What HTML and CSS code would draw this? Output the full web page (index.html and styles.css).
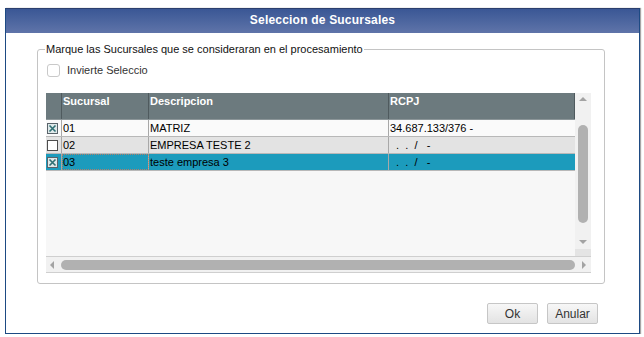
FILE: index.html
```html
<!DOCTYPE html>
<html lang="es">
<head>
    <meta charset="UTF-8">
    <meta name="viewport" content="width=device-width, initial-scale=1.0">
    <title>Seleccion de Sucursales</title>
    <link rel="stylesheet" href="styles.css">
</head>
<body>
    <div class="dialog">
        <div class="titlebar">Seleccion de Sucursales</div>

        <div class="dialog-body">
            <fieldset class="group">
                <legend>Marque las Sucursales que se consideraran en el procesamiento</legend>

                <label class="invert">
                    <span class="round-box"></span>
                    Invierte Seleccio
                </label>

                <div class="grid">
                    <div class="grid-main">
                        <div class="grid-view">
                            <div class="grid-row grid-head">
                                <div class="cell"></div>
                                <div class="cell">Sucursal</div>
                                <div class="cell">Descripcion</div>
                                <div class="cell">RCPJ</div>
                            </div>
                            <div class="grid-row row-odd">
                                <div class="cell cell-check">
                                    <svg width="11" height="11" viewBox="0 0 11 11"><rect x="0.5" y="0.5" width="10" height="10" fill="#dfe9ea" stroke="#59636a"/><path d="M2.5 2.5 L8.5 8.5 M8.5 2.5 L2.5 8.5" stroke="#2f6f73" stroke-width="1.6"/></svg>
                                </div>
                                <div class="cell">01</div>
                                <div class="cell">MATRIZ</div>
                                <div class="cell">34.687.133/376 -</div>
                            </div>
                            <div class="grid-row row-even">
                                <div class="cell cell-check">
                                    <svg width="11" height="11" viewBox="0 0 11 11"><rect x="0.5" y="0.5" width="10" height="10" fill="#fff" stroke="#4d4d4d"/></svg>
                                </div>
                                <div class="cell">02</div>
                                <div class="cell">EMPRESA TESTE 2</div>
                                <div class="cell">&nbsp; . &nbsp;. &nbsp;/ &nbsp; -</div>
                            </div>
                            <div class="grid-row row-selected">
                                <div class="cell cell-check">
                                    <svg width="11" height="11" viewBox="0 0 11 11"><rect x="0.5" y="0.5" width="10" height="10" fill="#dfe9ea" stroke="#59636a"/><path d="M2.5 2.5 L8.5 8.5 M8.5 2.5 L2.5 8.5" stroke="#2f6f73" stroke-width="1.6"/></svg>
                                </div>
                                <div class="cell cell-focus">03</div>
                                <div class="cell">teste empresa 3</div>
                                <div class="cell">&nbsp; . &nbsp;. &nbsp;/ &nbsp; -</div>
                            </div>
                        </div>

                        <div class="vscroll">
                            <span class="arrow arrow-up"></span>
                            <div class="vtrack"><div class="vthumb"></div></div>
                            <span class="arrow arrow-down"></span>
                            <div class="vcorner"></div>
                        </div>
                    </div>

                    <div class="hscroll">
                        <span class="arrow arrow-left"></span>
                        <div class="htrack"><div class="hthumb"></div></div>
                        <span class="arrow arrow-right"></span>
                    </div>
                </div>
            </fieldset>

            <div class="actions">
                <button type="button">Ok</button>
                <button type="button">Anular</button>
            </div>
        </div>
    </div>
</body>
</html>
```

FILE: styles.css
```css
:root {
    --title-top: #3a5795;
    --title-bottom: #5f74a9;
    --frame: #1d4a83;
    --head-bg: #6c7a7e;
    --selected: #1c9bbc;
    --scroll-track: #f1f1f1;
    --scroll-thumb: #b1b1b1;
}

html {
    height: 100%;
}

body {
    margin: 0;
    background: #fff;
    font-family: 'Liberation Sans', Arial, sans-serif;
    font-size: 11px;
    color: #000;
}

.dialog {
    margin: 8px 0 0 5px;
    width: 635px;
    height: 326px;
    box-sizing: border-box;
    border: 1px solid var(--frame);
    border-top-color: #2b3f6e;
    background: #fff;
    box-shadow: 1px 0 1px rgba(0, 0, 0, 0.35);
    display: flex;
    flex-direction: column;
}

.titlebar {
    height: 24px;
    line-height: 22px;
    text-align: center;
    color: #fff;
    font-size: 12px;
    font-weight: bold;
    letter-spacing: 0.2px;
    background: linear-gradient(var(--title-top), var(--title-bottom));
}

.dialog-body {
    flex: 1;
    padding: 10px 0 0 31px;
}

/* grupo con la grilla */
.group {
    margin: 0;
    width: 568px;
    box-sizing: border-box;
    padding: 7px 12px 10px 8px;
    border: 1px solid #c4c4c4;
    border-radius: 3px;
}

.group legend {
    padding: 0 1px;
    margin-left: -1px;
    color: #111;
    line-height: 13px;
}

.invert {
    display: flex;
    align-items: center;
    gap: 7px;
    height: 14px;
    margin: 0 0 16px 1px;
    color: #333;
    font-size: 11px;
}

.round-box {
    width: 11px;
    height: 11px;
    border: 1px solid #c9c9c9;
    border-radius: 3px;
    background: #fff;
}

.grid {
    width: 545px;
    background: #f7f7f7;
}

.grid-main {
    display: flex;
    height: 163px;
}

.grid-view {
    width: 529px;
}

.grid-row {
    display: grid;
    grid-template-columns: 16px 87px 240px 186px;
    height: 17px;
    box-sizing: border-box;
    border-bottom: 1px solid #b8b8b8;
}

.cell {
    box-sizing: border-box;
    border-right: 1px solid #a8a8a8;
    padding-left: 1px;
    line-height: 16px;
    white-space: nowrap;
    overflow: hidden;
}

.cell:last-child {
    border-right: none;
}

.grid-head {
    height: 27px;
    background: var(--head-bg);
    border-bottom: 1px solid #8b9598;
}

.grid-head .cell {
    color: #fff;
    font-weight: bold;
    line-height: 16px;
    border-right-color: #4f5a5e;
}

.grid-head .cell:last-child {
    border-right: 1px solid #4f5a5e;
}

.row-odd {
    background: #fafafa;
}

.row-even {
    background: #e3e3e3;
}

.row-selected {
    background: var(--selected);
}

.cell-check {
    display: flex;
    align-items: center;
    padding-left: 1px;
}

.cell-focus {
    outline: 1px dotted rgba(222, 120, 80, 0.75);
    outline-offset: -1px;
}

/* barras de desplazamiento */
.vscroll {
    width: 16px;
    background: var(--scroll-track);
    display: flex;
    flex-direction: column;
    align-items: center;
}

.vtrack {
    flex: 1;
    width: 100%;
    display: flex;
    justify-content: center;
    padding-top: 24px;
}

.vthumb {
    width: 10px;
    height: 98px;
    background: var(--scroll-thumb);
    border-radius: 5px;
}

.vcorner {
    width: 100%;
    height: 7px;
    background: #e4e4e4;
}

.hscroll {
    height: 17px;
    box-sizing: border-box;
    border-top: 1px solid #cfcfcf;
    border-bottom: 1px solid #cfcfcf;
    background: var(--scroll-track);
    display: flex;
    align-items: center;
}

.htrack {
    flex: 1;
    padding: 0 3px;
}

.hthumb {
    height: 10px;
    background: var(--scroll-thumb);
    border-radius: 5px;
}

.arrow {
    width: 0;
    height: 0;
    border: 4px solid transparent;
}

.arrow-up {
    margin-top: 4px;
    border-bottom-color: #a3a3a3;
    border-top-width: 0;
}

.arrow-down {
    margin-bottom: 5px;
    border-top-color: #a3a3a3;
    border-bottom-width: 0;
}

.arrow-left {
    margin: 0 4px 0 4px;
    border-right-color: #a3a3a3;
    border-left-width: 0;
}

.arrow-right {
    margin: 0 5px 0 4px;
    border-left-color: #a3a3a3;
    border-right-width: 0;
}

.actions {
    display: flex;
    justify-content: flex-end;
    gap: 9px;
    margin: 19px 41px 0 0;
}

.actions button {
    width: 51px;
    height: 21px;
    padding: 0;
    font-family: 'Liberation Sans', Arial, sans-serif;
    font-size: 12px;
    color: #333;
    background: linear-gradient(#f7f7f7, #e3e3e3);
    border: 1px solid #c6c6c6;
    border-radius: 2px;
}
```
